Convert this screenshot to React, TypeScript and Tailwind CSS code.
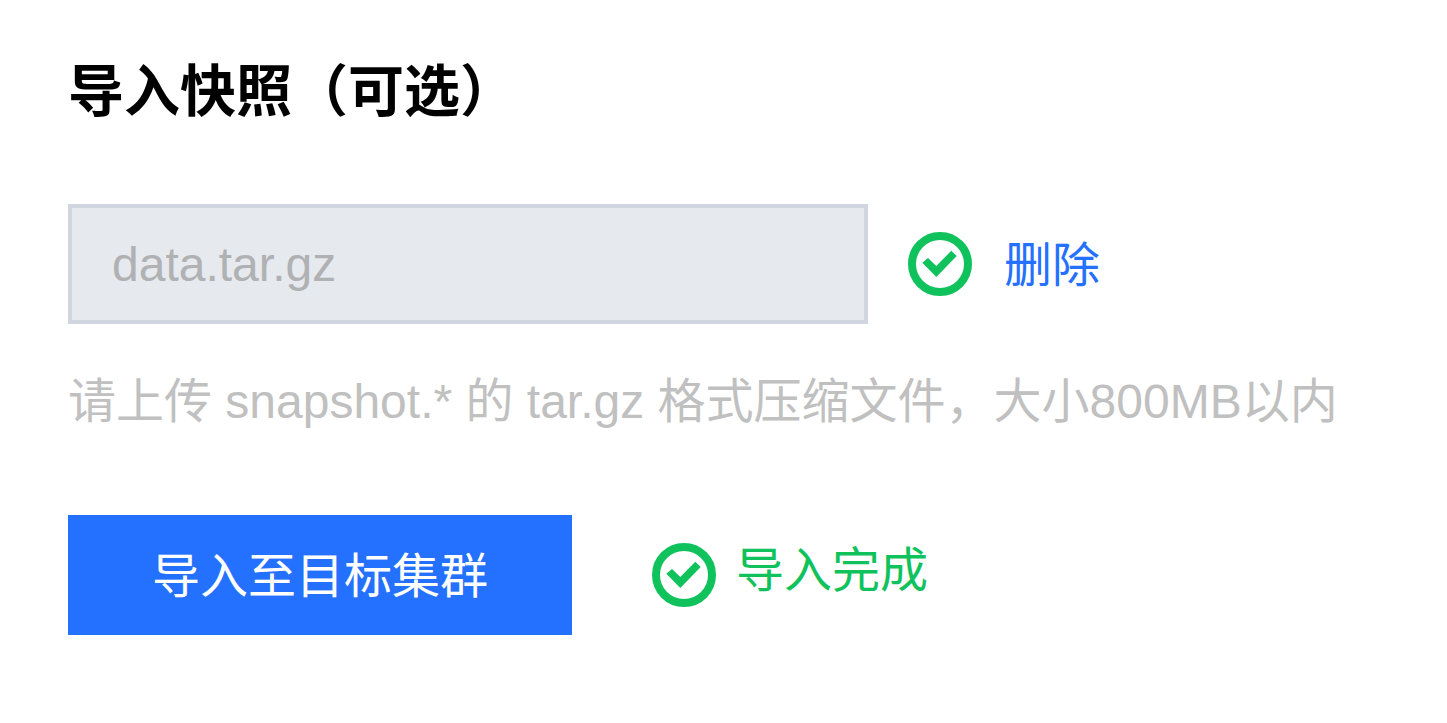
function CheckCircle() {
  return (
    <svg viewBox="0 0 64 64" className="size-16 shrink-0" aria-hidden="true">
      <circle cx="32" cy="32" r="28" fill="none" stroke="#0fc25b" strokeWidth="8" />
      <path d="M14.3 30.8L20 26l8.3 8L43.3 18.7l5.4 5.3-20.4 21z" fill="#0fc25b" />
    </svg>
  );
}

export default function App() {
  return (
    <main className="min-h-screen bg-white px-[68px] pt-[52px] pb-16 font-['Liberation_Sans','Noto_Sans_CJK_SC',sans-serif] text-[48px] leading-[72px]">
      <h1 className="text-[56px] leading-[80px] font-bold text-black">导入快照（可选）</h1>
      <form onSubmit={(e) => e.preventDefault()}>
        <div className="mt-[72px] flex items-center">
          <input
            type="text"
            aria-label="快照文件"
            disabled
            defaultValue="data.tar.gz"
            className="h-[120px] w-[800px] min-w-0 border-4 border-[#cfd6e0] bg-[#e6e9ee] px-10 text-[#b0b1b3]"
          />
          <div className="ml-10 flex shrink-0 items-center gap-8">
            <CheckCircle />
            <button type="button" className="pt-1 text-[#2470ff]">删除</button>
          </div>
        </div>
        <p className="mt-[42px] text-[#c0c0c0]">
          请上传 snapshot.* 的 tar.gz 格式压缩文件，大小800MB以内
        </p>
        <div className="mt-[77px] flex items-center gap-20">
          <button type="submit" className="h-[120px] w-[504px] bg-[#2470ff] pt-1 text-white">
            导入至目标集群
          </button>
          <div role="status" className="flex items-center gap-5 text-[#0fc25b]">
            <CheckCircle />
            <span className="pb-2">导入完成</span>
          </div>
        </div>
      </form>
    </main>
  );
}
